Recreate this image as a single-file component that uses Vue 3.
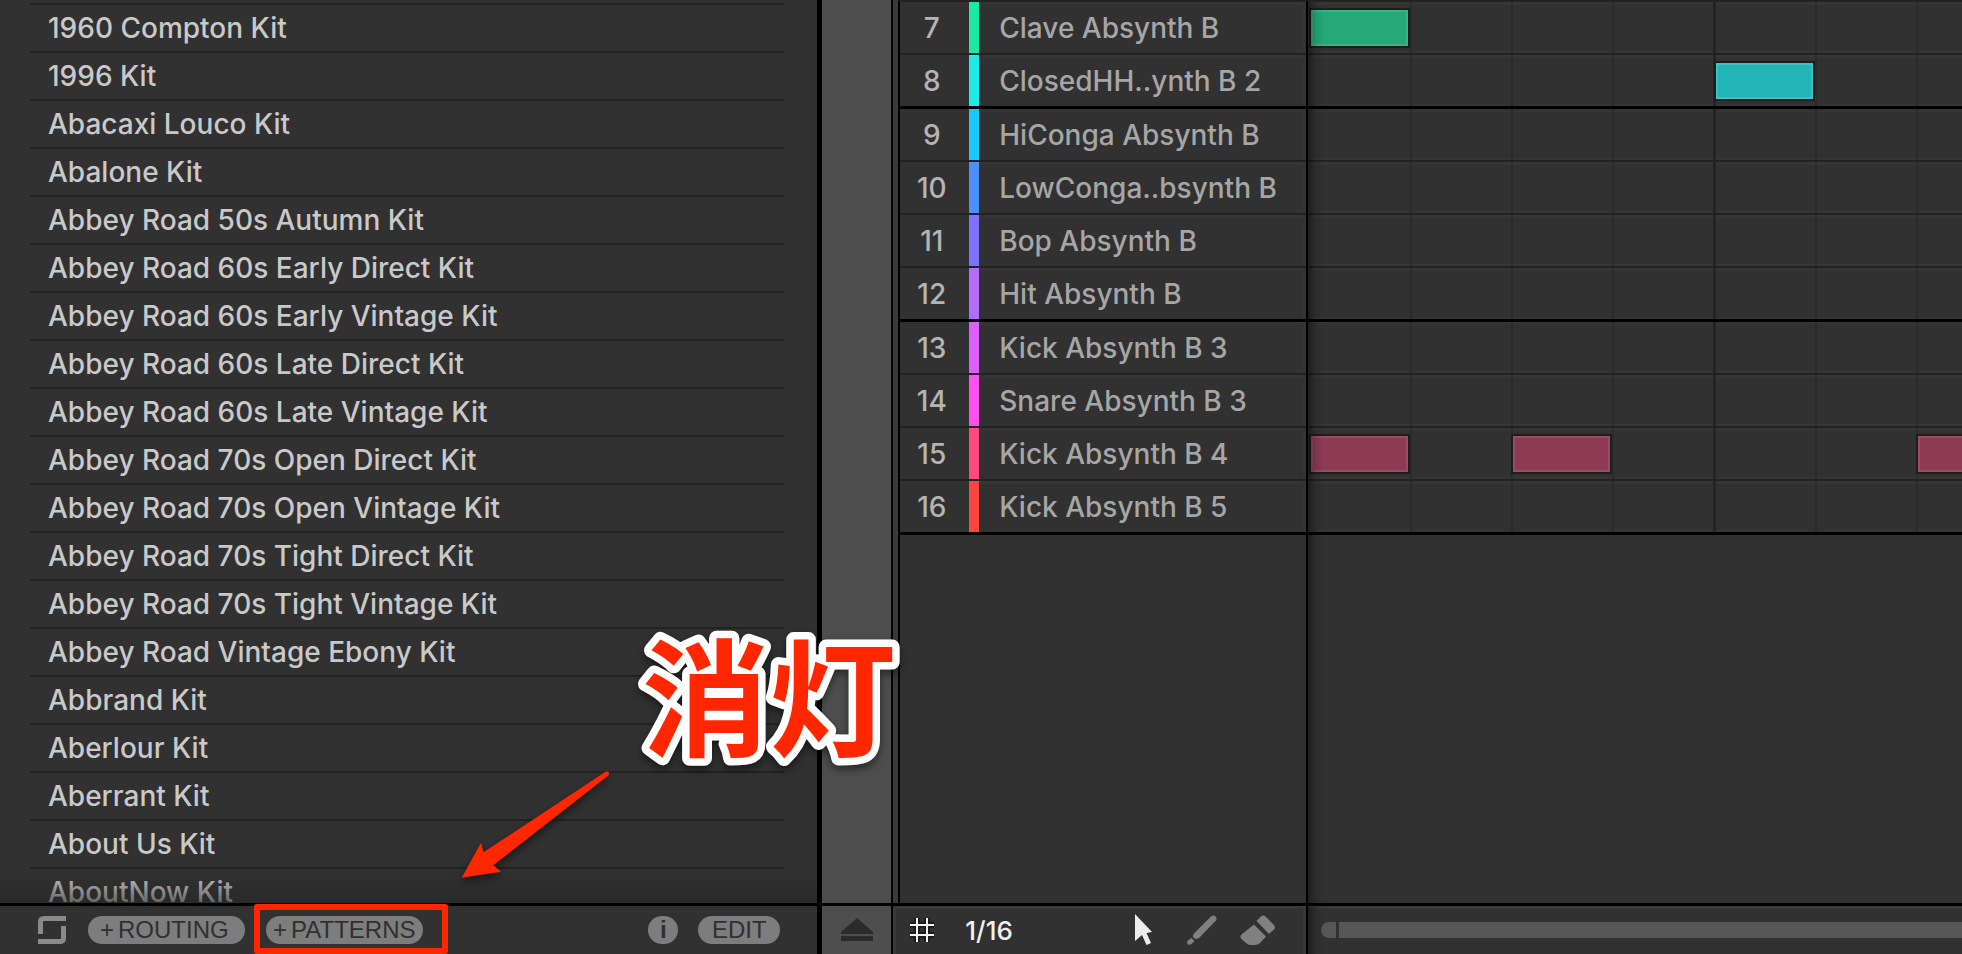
<template>
  <div class="app">
    <!-- Browser -->
    <section class="browser">
      <ul class="kit-list">
        <li v-for="kit in kits" :key="kit" class="kit-item">
          <button type="button" class="kit-button">{{ kit }}</button>
        </li>
      </ul>
      <footer class="browser-footer">
        <button type="button" class="icon-button sync-button" aria-label="Sync">
          <svg width="28" height="28" viewBox="0 0 28 28" fill="none" stroke="#8a8a8a" stroke-width="5">
            <path d="M2.5 18V6Q2.5 2.5 6 2.5H28" />
            <path d="M25.5 10V22Q25.5 25.5 22 25.5H0" />
          </svg>
        </button>
        <button type="button" class="pill pill--add"><span>+</span>ROUTING</button>
        <div class="highlighted">
          <button type="button" class="pill pill--add"><span>+</span>PATTERNS</button>
        </div>
        <button type="button" class="pill pill--info" aria-label="Info">i</button>
        <button type="button" class="pill pill--edit">EDIT</button>
      </footer>
    </section>

    <!-- Divider rail -->
    <div class="rail">
      <div class="rail-body"></div>
      <button type="button" class="icon-button rail-button" aria-label="Eject">
        <svg width="34" height="24" viewBox="0 0 34 24" fill="#2b2b2b">
          <path d="M17 0L33 14V16H1V14Z" />
          <path d="M1 18H33V23H1Z" />
        </svg>
      </button>
    </div>

    <!-- Pattern editor -->
    <section class="editor">
      <div class="editor-main">
        <div class="track-heads">
          <div
            v-for="track in tracks"
            :key="track.id"
            class="track-head"
            :class="{ 'row--heavy': track.id % 4 === 0 }"
          >
            <span class="track-number">{{ track.id }}</span>
            <span class="track-color" :style="{ background: track.color }"></span>
            <span class="track-name">{{ track.name }}</span>
          </div>
        </div>
        <div class="lanes">
          <div
            v-for="track in tracks"
            :key="track.id"
            class="lane"
            :class="{ 'row--heavy': track.id % 4 === 0 }"
          >
            <div v-for="step in 16" :key="step" class="step">
              <div
                v-if="track.steps.includes(step)"
                class="note"
                :style="{ background: track.note, borderColor: track.edge }"
              ></div>
            </div>
          </div>
        </div>
      </div>

      <footer class="editor-footer">
        <div class="toolbar">
          <button type="button" class="icon-button grid-button" aria-label="Grid">
            <svg width="30" height="30" viewBox="0 0 30 30" fill="none">
              <path d="M10 3V27M20 3V27M3 10H27M3 20H27" stroke="#1c1c1c" stroke-width="6" />
              <path d="M10 3V27M20 3V27M3 10H27M3 20H27" stroke="#f4f4f4" stroke-width="2" />
            </svg>
          </button>
          <select class="step-select" aria-label="Step size">
            <option>1/16</option>
          </select>
          <div class="tools">
            <button type="button" class="icon-button" aria-label="Select">
              <svg width="18" height="32" viewBox="0 0 18 32" fill="#ececec">
                <path d="M0 0L17 18L11.500 19L16 29L11.500 31L7 21L0 27Z" />
              </svg>
            </button>
            <button type="button" class="icon-button" aria-label="Draw">
              <svg width="30" height="30" viewBox="0 0 30 30" fill="#808080">
                <path d="M24 1.500Q26.500-.5 28.500 1.500Q30.500 3.500 28.500 6L12 23Q9 25 7 23Q5 21 7 18.500Z" />
                <path d="M4.500 23L7.500 26L4.500 29Q2 30.500.8 29.200Q-.5 28 1 25.500Z" />
              </svg>
            </button>
            <button type="button" class="icon-button" aria-label="Erase">
              <svg width="36" height="30" viewBox="0 0 36 30" fill="#808080">
                <path d="M21 1.500Q23-.5 25.500 1.500L34 10Q36 12.500 34 14.500L29 19L16.500 6Z" />
                <path d="M14 9.500L26 21.500L20 28Q18 30 15 30H10Q8 30 6 28L1.500 24Q-.5 21.500 1.500 19.500Z" />
              </svg>
            </button>
          </div>
        </div>
        <div class="scroll-area">
          <div class="scroll-cap"></div>
          <div class="scroll-thumb"></div>
        </div>
      </footer>
    </section>

    <!-- Callout -->
    <svg class="callout-arrow" width="160" height="120" viewBox="0 0 160 120" aria-hidden="true">
      <path
        d="M11.700 107.700L31 72.700L33.500 82.300L155.500 1.800Q158 .6 159 2.800Q159.600 4.300 158 5.800L43.300 95.300L51.300 101.700Z"
        fill="#ff2600"
      />
    </svg>
    <svg class="callout-text" width="280" height="160" viewBox="0 0 280 160">
      <text x="12" y="125">消灯</text>
    </svg>
  </div>
</template>

<script setup>
const kits = [
  '1960 Compton Kit',
  '1996 Kit',
  'Abacaxi Louco Kit',
  'Abalone Kit',
  'Abbey Road 50s Autumn Kit',
  'Abbey Road 60s Early Direct Kit',
  'Abbey Road 60s Early Vintage Kit',
  'Abbey Road 60s Late Direct Kit',
  'Abbey Road 60s Late Vintage Kit',
  'Abbey Road 70s Open Direct Kit',
  'Abbey Road 70s Open Vintage Kit',
  'Abbey Road 70s Tight Direct Kit',
  'Abbey Road 70s Tight Vintage Kit',
  'Abbey Road Vintage Ebony Kit',
  'Abbrand Kit',
  'Aberlour Kit',
  'Aberrant Kit',
  'About Us Kit',
  'AboutNow Kit',
]

const tracks = [
  { id: 7, name: 'Clave Absynth B', color: '#1aeaa4', note: '#25a87a', edge: '#3eb289', steps: [1] },
  { id: 8, name: 'ClosedHH..ynth B 2', color: '#1cece9', note: '#21b5b7', edge: '#40c0c1', steps: [5] },
  { id: 9, name: 'HiConga Absynth B', color: '#18c8ff', steps: [] },
  { id: 10, name: 'LowConga..bsynth B', color: '#4c90ff', steps: [] },
  { id: 11, name: 'Bop Absynth B', color: '#8070ff', steps: [] },
  { id: 12, name: 'Hit Absynth B', color: '#b26cff', steps: [] },
  { id: 13, name: 'Kick Absynth B 3', color: '#dd5fff', steps: [] },
  { id: 14, name: 'Snare Absynth B 3', color: '#ff50ef', steps: [] },
  { id: 15, name: 'Kick Absynth B 4', color: '#ff4880', note: '#8e3a55', edge: '#994c65', steps: [1, 3, 7] },
  { id: 16, name: 'Kick Absynth B 5', color: '#ff433e', steps: [] },
]
</script>

<style>
body {
  background: #313131;
}
</style>

<style scoped>
.app {
  position: relative;
  display: grid;
  grid-template-columns: 13fr 76px 17fr;
  height: 100vh;
  overflow: hidden;
  background: #313131;
  color: #c9c9c9;
  font-family: Inter, 'Liberation Sans', sans-serif;
  font-size: 28px;
  font-weight: 500;
}

button,
select {
  margin: 0;
  padding: 0;
  border: 0;
  background: none;
  color: inherit;
  font: inherit;
}

.icon-button {
  display: flex;
}

/* ==================== BROWSER ==================== */
.browser {
  display: flex;
  flex-direction: column;
  min-width: 0;
  min-height: 0;
}

.kit-list {
  position: relative;
  flex: 1;
  min-height: 0;
  margin: 0;
  padding: 3px 33px 0 30px;
  overflow: hidden;
  list-style: none;
}

.kit-list::after {
  content: '';
  position: absolute;
  inset: auto 0 0;
  height: 32px;
  background: linear-gradient(rgba(36, 36, 36, 0), rgba(36, 36, 36, 0.6));
}

.kit-item {
  height: 46px;
  border-top: 2px solid #232323;
}

.kit-button {
  width: 100%;
  height: 46px;
  padding-left: 18px;
  text-align: left;
  white-space: nowrap;
}

.browser-footer {
  display: flex;
  align-items: center;
  height: 48px;
  padding: 0 37px 0 38px;
  border-top: 3px solid #000;
}

.sync-button {
  margin-right: 22px;
}

.pill {
  height: 28px;
  border-radius: 14px;
  background: #7d7d7d;
  color: #303030;
  font-family: 'Liberation Sans', Arial, sans-serif;
  font-size: 24px;
  line-height: 28px;
}

.pill--add {
  display: flex;
  gap: 4px;
  width: 157px;
  padding-left: 12px;
}

.highlighted {
  position: relative;
  margin: 0 auto 0 21px;
}

.highlighted .pill {
  padding-left: 7px;
}

.highlighted::after {
  content: '';
  position: absolute;
  inset: -12px -25px -10px -12px;
  border: 6px solid #ff2600;
  border-radius: 3px;
  pointer-events: none;
}

.pill--info {
  width: 30px;
  margin-right: 20px;
  font-weight: bold;
}

.pill--edit {
  width: 82px;
}

/* ==================== RAIL ==================== */
.rail {
  display: flex;
  flex-direction: column;
  border-right: 2px solid #000;
  border-left: 5px solid #000;
  background: #4e4e4e;
}

.rail-body {
  flex: 1;
}

.rail-button {
  justify-content: center;
  align-items: center;
  height: 51px;
  border-top: 3px solid #000;
}

/* ==================== EDITOR ==================== */
.editor {
  display: flex;
  flex-direction: column;
  min-width: 0;
}

.editor-main {
  display: flex;
  flex: 1;
  min-height: 0;
  border-left: 5px solid #3a3a3a;
}

.track-heads,
.lanes {
  border-top: 2px solid #222;
}

.track-heads {
  flex: none;
  width: 406px;
  border-right: 2px solid #000;
  border-left: 2px solid #000;
}

.track-head,
.lane {
  display: flex;
  height: 51px;
  border-bottom: 2px solid #222;
}

.track-head {
  align-items: center;
}

.row--heavy {
  border-bottom: 3px solid #000;
}

.track-number {
  width: 69px;
  padding-right: 6px;
  box-sizing: border-box;
  color: #b4b4b4;
  text-align: center;
}

.track-color {
  width: 10px;
  height: 51px;
}

.track-name {
  display: flex;
  flex: 1;
  align-items: center;
  height: 51px;
  padding-left: 20px;
  box-shadow: inset 0 3px #353535, inset -3px 0 #353535;
  color: #a6a6a6;
  white-space: nowrap;
}

.lanes {
  position: relative;
  flex: 1;
  min-width: 0;
  overflow: hidden;
}

.lanes::after,
.scroll-area::after {
  content: '';
  position: absolute;
  inset: 0 auto 0 0;
  width: 16px;
  background: linear-gradient(90deg, rgba(0, 0, 0, 0.4), rgba(0, 0, 0, 0.1) 50%, rgba(0, 0, 0, 0));
}

.lane {
  padding-left: 3px;
}

.step {
  flex: none;
  width: 99px;
  border-right: 2px solid #2b2b2b;
  box-shadow: inset 0 3px #353535, inset 0 -2px #353535;
}

.step:nth-child(4n) {
  border-right: 3px solid #242424;
}

.note {
  position: relative;
  box-sizing: border-box;
  width: 97px;
  height: 36px;
  margin-top: 8px;
  border: 2px solid;
  box-shadow: 0 0 0 2px #1e1e1e;
}

/* ==================== EDITOR FOOTER ==================== */
.editor-footer {
  display: flex;
  height: 48px;
  border-top: 3px solid #000;
}

.toolbar {
  display: flex;
  flex: none;
  align-items: center;
  box-sizing: border-box;
  width: 415px;
  padding: 0 30px 0 14px;
  border-right: 2px solid #000;
  box-shadow: inset 0 3px #393939, inset 3px 0 #393939, inset -3px 0 #393939;
}

.step-select {
  width: 80px;
  margin-left: 28px;
  appearance: none;
  color: #f0f0f0;
  font-size: 26px;
}

.tools {
  display: flex;
  align-items: center;
  margin-left: auto;
}

.tools .icon-button:nth-child(1) {
  margin-right: 34px;
}

.tools .icon-button:nth-child(2) {
  margin-right: 23px;
}

.scroll-area {
  position: relative;
  display: flex;
  flex: 1;
  align-items: center;
  gap: 3px;
  padding-left: 13px;
  box-shadow: inset 0 3px #393939;
}

.scroll-cap {
  width: 15px;
  height: 16px;
  border-radius: 8px 0 0 8px;
  background: #575757;
}

.scroll-thumb {
  flex: 1;
  height: 16px;
  background: #575757;
}

/* ==================== CALLOUT ==================== */
.callout-arrow {
  position: absolute;
  bottom: 64px;
  left: 450px;
  filter: drop-shadow(0 4px 4px rgba(0, 0, 0, 0.5));
}

.callout-text {
  position: absolute;
  bottom: 172px;
  left: 630px;
  fill: #ff2600;
  filter: drop-shadow(0 4px 4px rgba(0, 0, 0, 0.5));
  font-family: 'Noto Sans CJK JP', sans-serif;
  font-size: 127px;
  font-weight: bold;
  paint-order: stroke;
  stroke: #fff;
  stroke-linejoin: round;
  stroke-width: 15px;
}
</style>
